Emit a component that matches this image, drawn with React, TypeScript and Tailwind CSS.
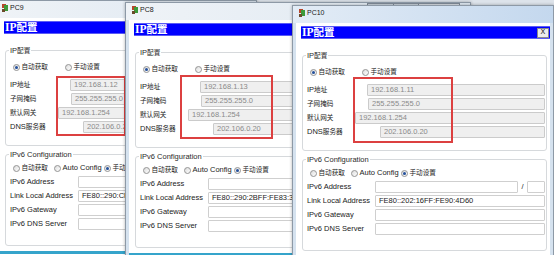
import React from "react";

const CJK = /([\u3000-\u9fff\uff00-\uffef]+)/;

function Txt({ s }: { s: string }) {
  const parts = s.split(CJK);
  return (
    <>
      {parts.map((p, i) =>
        i % 2 === 1 ? (
          <span key={i} className="text-[6.6px]">
            {p}
          </span>
        ) : (
          <React.Fragment key={i}>{p}</React.Fragment>
        )
      )}
    </>
  );
}

function Icon() {
  return (
    <svg width="6" height="8" viewBox="0 0 6 8" className="mt-[1px] shrink-0">
      <rect x="0" y="0" width="4" height="4" fill="#b8452a" />
      <rect x="2" y="1" width="4" height="6" fill="#3d9a3a" />
      <rect x="0" y="5" width="3" height="3" fill="#6b4a2a" />
    </svg>
  );
}

function Radio({ checked }: { checked?: boolean }) {
  return (
    <span className="flex h-[7px] w-[7px] shrink-0 items-center justify-center rounded-full border border-[#949494] bg-linear-to-br from-[#dcdcdc] to-white">
      {checked && <span className="h-[3px] w-[3px] rounded-full bg-[#24509c]" />}
    </span>
  );
}

function Opt({ label, checked, w }: { label: string; checked?: boolean; w: string }) {
  return (
    <div className={`flex items-center gap-[1.5px] ${w}`}>
      <Radio checked={checked} />
      <span className="whitespace-nowrap">
        <Txt s={label} />
      </span>
    </div>
  );
}

function Row({ label, lw, children }: { label: string; lw: string; children: React.ReactNode }) {
  return (
    <div className="flex h-[14px] items-center">
      <div className={`shrink-0 whitespace-nowrap ${lw}`}>
        <Txt s={label} />
      </div>
      {children}
    </div>
  );
}

function Disabled({ v }: { v: string }) {
  return (
    <div className="h-[12px] min-w-0 flex-1 overflow-hidden whitespace-nowrap rounded-[1px] border border-[#cbcbcb] bg-[#efefef] pl-[3px] leading-[10px] text-[#8a8a8a]">
      {v}
    </div>
  );
}

function Field({ v }: { v?: string }) {
  return (
    <div className="h-[12px] min-w-0 flex-1 overflow-hidden whitespace-nowrap rounded-[1px] border border-[#cfcfcf] bg-white pl-[3px] leading-[10px] text-[#222]">
      {v}
    </div>
  );
}

function Group({ legend, cls, children }: { legend: string; cls: string; children: React.ReactNode }) {
  return (
    <div className={`relative ml-[6px] mr-[3px] rounded-[3px] border border-[#d6d9dc] pl-[4px] pr-[1px] ${cls}`}>
      <span className="absolute -top-[6px] left-[3px] bg-white px-[1px] leading-[11px] text-[#2a2a2a]">
        <Txt s={legend} />
      </span>
      {children}
    </div>
  );
}

type WinProps = {
  pos: string;
  title: string;
  ip: string;
  ll: string;
  red: string;
  active?: boolean;
  caption?: boolean;
};

function Win({ pos, title, ip, ll, red, active, caption }: WinProps) {
  return (
    <div
      className={`absolute ${pos} h-[262px] overflow-hidden border border-[#8d99a6] bg-[#d5e2ef] font-['Liberation_Sans','Noto_Sans_CJK_SC',sans-serif] text-[7.5px] text-[#222] shadow-[0_0_3px_rgba(0,0,0,0.3)]`}
    >
      <div
        className={`flex h-[17px] items-start pl-[6px] pt-[2px] ${
          active ? "bg-linear-to-r from-[#e3ecf6] to-[#c4d8ee]" : "bg-linear-to-r from-[#eff3f7] to-[#dde7f1]"
        }`}
      >
        <Icon />
        <span className="ml-[2px] text-[7px] leading-[9px] text-[#1a1a1a]">{title}</span>
      </div>
      {caption && (
        <div className="absolute right-[10px] top-0 flex h-[16px] border border-[#7f8a96] bg-[#c9d3dd]">
          <div className="w-[26px] border-r border-[#7f8a96]" />
          <div className="w-[25px] border-r border-[#7f8a96]" />
          <div className="w-[40px] bg-[#d9dfe6]" />
        </div>
      )}
      <div className="mx-[3px] h-full bg-white pt-[3px]">
        <div className="ml-[5px] flex h-[13px] items-center justify-between border-y border-[#5b5bf5] bg-[#0000ff]">
          <span className="pl-[1px] font-['Liberation_Serif','Noto_Sans_CJK_SC',serif] text-[11.5px] font-bold leading-[12px] text-white">
            IP<span className="text-[10.5px]">配置</span>
          </span>
          <span className="mr-[1px] flex h-[10px] w-[12px] items-center justify-center border border-[#8a8a8a] bg-[#ececec] font-['DejaVu_Sans',sans-serif] text-[7px] leading-none text-[#222]">
            X
          </span>
        </div>

        <Group legend="IP配置" cls="mt-[16px] pt-[10px] pb-[11px]">
          <div className="flex h-[12px] items-center pl-[3px]">
            <Opt label="自动获取" checked w="w-[52px]" />
            <Opt label="手动设置" w="w-[60px]" />
          </div>
          <div className="mt-[5px]">
            <Row label="IP地址" lw="w-[60px]">
              <Disabled v={ip} />
            </Row>
            <Row label="子网掩码" lw="w-[61px]">
              <Disabled v="255.255.255.0" />
            </Row>
            <Row label="默认网关" lw="w-[48px]">
              <Disabled v="192.168.1.254" />
            </Row>
            <Row label="DNS服务器" lw="w-[73px]">
              <Disabled v="202.106.0.20" />
            </Row>
          </div>
        </Group>

        <Group legend="IPv6 Configuration" cls="mt-[8px] pt-[7px] pb-[14px]">
          <div className="flex h-[12px] items-center pl-[3px]">
            <Opt label="自动获取" w="w-[41px]" />
            <Opt label="Auto Config" w="w-[50px]" />
            <Opt label="手动设置" checked w="w-[50px]" />
          </div>
          <div className="mt-[1px]">
            <Row label="IPv6 Address" lw="w-[68px]">
              <Field />
              <span className="w-[9px] shrink-0 text-center">/</span>
              <div className="h-[12px] w-[18px] shrink-0 rounded-[1px] border border-[#cfcfcf] bg-white" />
            </Row>
            <Row label="Link Local Address" lw="w-[68px]">
              <Field v={ll} />
            </Row>
            <Row label="IPv6 Gateway" lw="w-[68px]">
              <Field />
            </Row>
            <Row label="IPv6 DNS Server" lw="w-[68px]">
              <Field />
            </Row>
          </div>
        </Group>
        <div className="mt-[5px] h-[3px] bg-[#35a4cb]" />
      </div>
      <div className={`pointer-events-none absolute border-2 border-[#dc4040] ${red}`} />
    </div>
  );
}

export default function App() {
  return (
    <div className="relative h-[255px] w-[554px] overflow-hidden bg-[#dde3ea]">
      <Win
        pos="left-[-5px] top-0 w-[262px]"
        title="PC9"
        ip="192.168.1.12"
        ll="FE80::290:CFFF:FE4A:1B02"
        red="left-[60px] top-[75px] w-[70px] h-[60px]"
      />
      <Win
        pos="left-[125px] top-[2px] w-[346px]"
        title="PC8"
        ip="192.168.1.13"
        ll="FE80::290:2BFF:FE83:3A01"
        red="left-[54px] top-[72px] w-[93px] h-[64px]"
        caption
      />
      <Win
        pos="left-[292px] top-[5px] w-[262px]"
        title="PC10"
        ip="192.168.1.11"
        ll="FE80::202:16FF:FE90:4D60"
        red="left-[60px] top-[71px] w-[100px] h-[66px]"
        active
      />
    </div>
  );
}
